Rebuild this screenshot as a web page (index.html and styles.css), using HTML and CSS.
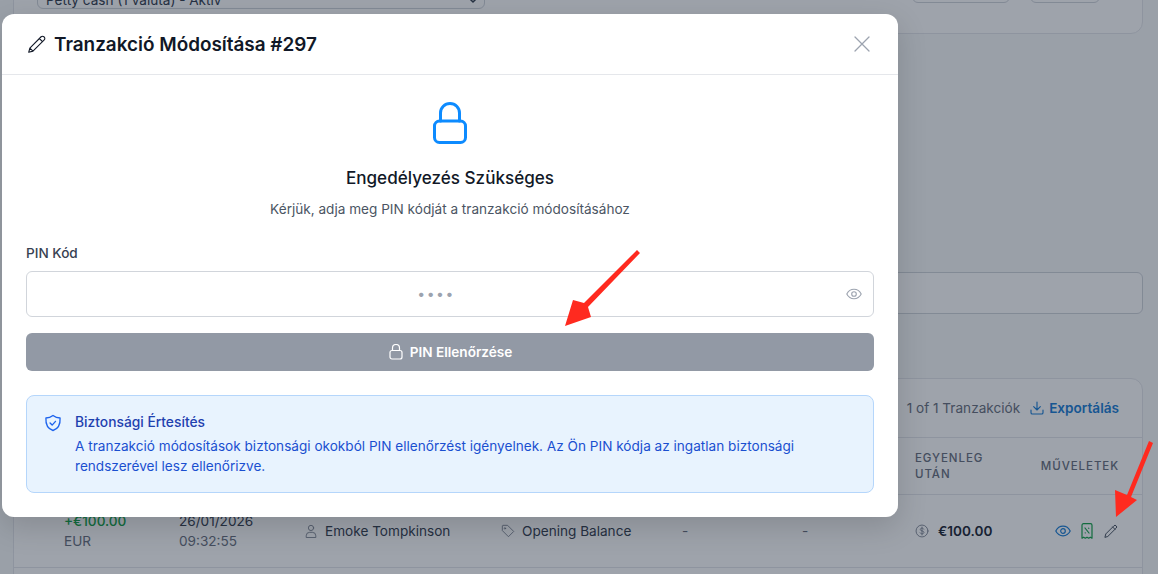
FILE: index.html
```html
<!DOCTYPE html>
<html lang="hu">

<head>
	<meta charset="utf-8">
	<title>Tranzakció Módosítása #297</title>
	<link rel="stylesheet" href="styles.css">
</head>

<body>
	<div class="page">
		<div class="card filter-card">
			<div class="select">
				<span>Petty cash (1 valuta) - Aktív</span>
				<svg class="chevron" viewBox="0 0 12 12"><path d="M2.5 4.5 6 8l3.5-3.5" /></svg>
			</div>
			<div class="filter-btn btn-wide"></div>
			<div class="filter-btn btn-narrow"></div>
		</div>

		<div class="search-box"></div>

		<div class="card table-card">
			<div class="table-top">
				<span class="count">1 of 1 Tranzakciók</span>
				<span class="export">
					<svg class="icon-sm" viewBox="0 0 24 24"><path d="M3 15v4a2 2 0 0 0 2 2h14a2 2 0 0 0 2-2v-4M7 10l5 5 5-5M12 15V3" /></svg>
					Exportálás
				</span>
			</div>

			<div class="tx-grid tx-head">
				<div></div>
				<div></div>
				<div></div>
				<div></div>
				<div></div>
				<div></div>
				<div>Egyenleg<br>után</div>
				<div class="right">Műveletek</div>
			</div>

			<div class="tx-grid tx-row">
				<div>
					<div class="amount">+€100.00</div>
					<div class="muted">EUR</div>
				</div>
				<div>
					<div>26/01/2026</div>
					<div class="muted">09:32:55</div>
				</div>
				<div class="with-icon">
					<svg class="icon-row" viewBox="0 0 16 16"><circle cx="8" cy="4.5" r="3" /><path d="M2.5 15v-1.5a4 4 0 0 1 4-4h3a4 4 0 0 1 4 4V15z" /></svg>
					Emoke Tompkinson
				</div>
				<div class="with-icon">
					<svg class="icon-row" viewBox="0 0 16 16"><path d="M1.5 2.5v5l7 7 6-6-7-7h-5z" /><circle cx="4.5" cy="5" r=".8" /></svg>
					Opening Balance
				</div>
				<div class="muted">-</div>
				<div class="muted">-</div>
				<div class="with-icon balance">
					<svg class="icon-row" viewBox="0 0 16 16"><circle cx="8" cy="8" r="6.8" /><path d="M10 5.8C9.5 5 8.8 4.8 8 4.8c-1.2 0-2 .6-2 1.5 0 2.2 4.2 1 4.2 3.3 0 1-.9 1.6-2.2 1.6-.9 0-1.7-.4-2.2-1.1M8 3.5v9" /></svg>
					€100.00
				</div>
				<div class="actions">
					<svg class="act act-view" viewBox="0 0 16 16"><path d="M.8 8C2.3 5 5 3.2 8 3.2S13.7 5 15.2 8c-1.5 3-4.2 4.8-7.2 4.8S2.3 11 .8 8z" /><circle cx="8" cy="8" r="2.3" /></svg>
					<svg class="act act-receipt" viewBox="0 0 16 16"><path d="M3 2.2A1.5 1.5 0 0 1 4.5.7h7A1.5 1.5 0 0 1 13 2.2v13l-1.7-1-1.600 1-1.700-1-1.700 1-1.600-1-1.700 1z" /><path d="m6 5 4 5M6.200 9.800l.1.100M9.700 5.200l.1.100" /></svg>
					<svg class="act act-edit" viewBox="0 0 24 24"><path d="m3 21 1.200-4.600L16.500 4.100a2.100 2.100 0 0 1 3 0l.4.4a2.100 2.100 0 0 1 0 3L7.600 19.800zM14.500 6 18 9.500" /></svg>
				</div>
			</div>
			<div class="tx-grid tx-row"></div>
		</div>

		<div class="overlay"></div>

		<div class="modal">
			<div class="modal-header">
				<svg class="title-icon" viewBox="0 0 24 24"><path d="m3 21 1.200-4.600L16.500 4.100a2.100 2.100 0 0 1 3 0l.4.4a2.100 2.100 0 0 1 0 3L7.600 19.800zM14.500 6 18 9.500M4.200 16.400l3.400 3.400" /></svg>
				<h2>Tranzakció Módosítása #297</h2>
				<svg class="close" viewBox="0 0 16 16"><path d="m1 1 14 14M15 1 1 15" /></svg>
			</div>

			<div class="modal-body">
				<div class="auth-head">
					<svg class="lock-big" viewBox="0 0 48 48"><rect x="8.500" y="22" width="31" height="21.500" rx="5" /><path d="M14.500 22v-8a9.500 9.500 0 0 1 19 0v8" /></svg>
					<h3>Engedélyezés Szükséges</h3>
					<p>Kérjük, adja meg PIN kódját a tranzakció módosításához</p>
				</div>

				<label class="pin-label" for="pin">PIN Kód</label>
				<div class="pin-field">
					<input id="pin" type="text" placeholder="••••">
					<svg class="pin-eye" viewBox="0 0 16 16"><path d="M.8 8C2.300 5 5 3.200 8 3.200S13.700 5 15.200 8c-1.500 3-4.200 4.800-7.200 4.800S2.300 11 .8 8z" /><circle cx="8" cy="8" r="2.300" /></svg>
				</div>

				<button class="verify-btn">
					<svg class="btn-lock" viewBox="0 0 16 16"><rect x="2" y="6.500" width="12" height="8.500" rx="2" /><path d="M4.500 6.500V4a3.500 3.500 0 0 1 7 0v2.500" /></svg>
					PIN Ellenőrzése
				</button>

				<div class="notice">
					<svg class="notice-icon" viewBox="0 0 24 24"><path d="M12 3c2.500 2 5.300 3 8.500 3 .5 8-2.500 13-8.500 15C6 19 3 14 3.500 6c3.200 0 6-1 8.500-3z" /><path d="m8.500 12 2.500 2.500 4-4.500" /></svg>
					<div>
						<div class="notice-title">Biztonsági Értesítés</div>
						<div class="notice-text">A tranzakció módosítások biztonsági okokból PIN ellenőrzést igényelnek. Az Ön PIN kódja az ingatlan biztonsági rendszerével lesz ellenőrizve.</div>
					</div>
				</div>
			</div>
		</div>

		<!-- red arrows drawn on top of the screenshot -->
		<svg class="arrows" viewBox="0 0 1158 574">
			<polygon points="640,253 637,250 584,303 573,300 565,326 591,317 588,307" />
			<polygon points="1153,443 1149,441 1127,495 1115,490 1116,517 1137,500 1131,497" />
		</svg>
	</div>
</body>

</html>
```

FILE: styles.css
```css
* {
	box-sizing: border-box;
}

html,
body {
	margin: 0;
	height: 100%;
}

body {
	font-family: Inter, "Liberation Sans", sans-serif;
	font-size: 13.6px;
	line-height: 20px;
	color: #1f2937;
	background: #f9fafb;
}

svg {
	fill: none;
	stroke: currentColor;
	stroke-linecap: round;
	stroke-linejoin: round;
}

.page {
	position: relative;
	width: 1158px;
	height: 574px;
	overflow: hidden;
	padding: 0 15px 0 13px;
}

.card {
	background: #fff;
	border: 1px solid #e5e7eb;
	border-radius: 12px;
}

/* top filter card, mostly scrolled away */
.filter-card {
	display: flex;
	align-items: flex-start;
	margin-top: -57px;
	height: 91px;
	padding: 21px 23px 0;
}

.select {
	display: flex;
	align-items: center;
	justify-content: space-between;
	width: 448px;
	height: 38px;
	margin-top: 6px;
	padding: 19px 5px 0 8px;
	border: 1px solid #d1d5db;
	border-radius: 6px;
	color: #374151;
}

.chevron {
	width: 12px;
	height: 12px;
	stroke-width: 1.5;
}

.filter-btn {
	height: 38px;
	border: 1px solid #d1d5db;
	border-radius: 6px;
}

.btn-wide {
	width: 98px;
	margin-left: 427px;
}

.btn-narrow {
	width: 70px;
	margin-left: 20px;
}

.search-box {
	height: 42px;
	margin-top: 238px;
	background: #fff;
	border: 1px solid #d1d5db;
	border-radius: 6px;
}

.table-card {
	margin-top: 64px;
	height: 260px;
}

.table-top {
	display: flex;
	align-items: center;
	justify-content: flex-end;
	gap: 9px;
	height: 58px;
	padding-right: 23px;
}

.count {
	color: #6b7280;
}

.export {
	display: flex;
	align-items: center;
	gap: 4px;
	color: #1d7fd6;
	font-weight: 600;
}

.icon-sm {
	width: 16px;
	height: 16px;
	stroke-width: 1.7;
}

.tx-grid {
	display: grid;
	grid-template-columns: 115px 125px 197px 181px 120px 113px 1fr auto;
	align-items: center;
	padding: 0 23px 0 50px;
}

.tx-head {
	height: 58px;
	border-top: 1px solid #e5e7eb;
	border-bottom: 1px solid #e5e7eb;
	font-size: 11.5px;
	font-weight: 500;
	line-height: 16px;
	letter-spacing: 0.08em;
	text-transform: uppercase;
	color: #6b7280;
}

.tx-head .right {
	text-align: right;
	white-space: nowrap;
}

.tx-row {
	height: 73px;
	border-bottom: 1px solid #e5e7eb;
	color: #374151;
}

.amount {
	color: #16a34a;
	font-weight: 500;
}

.muted {
	color: #6b7280;
}

.with-icon {
	display: flex;
	align-items: center;
	gap: 7px;
}

.icon-row {
	width: 14px;
	height: 14px;
	color: #7b8290;
	stroke-width: 1;
	flex: none;
}

.balance {
	gap: 9px;
	font-weight: 600;
	color: #1f2937;
	white-space: nowrap;
}

.actions {
	display: flex;
	align-items: center;
	justify-content: flex-end;
	gap: 8px;
}

.act {
	width: 16px;
	height: 16px;
	stroke-width: 1.2;
	flex: none;
}

.act-view {
	color: #1d7fd6;
}

.act-receipt {
	color: #16a34a;
}

.act-edit {
	color: #4b5563;
	stroke-width: 1.5;
}

.overlay {
	position: absolute;
	inset: 0;
	background: rgba(12, 26, 44, 0.4);
}

.modal {
	position: absolute;
	top: 14px;
	left: 2px;
	width: 896px;
	background: #fff;
	border-radius: 12px;
	box-shadow: 0 10px 30px rgba(0, 0, 0, 0.15);
}

.modal-header {
	display: flex;
	align-items: center;
	height: 61px;
	padding: 0 28px 0 24px;
	border-bottom: 1px solid #e5e7eb;
}

.title-icon {
	width: 22px;
	height: 22px;
	margin-right: 6px;
	color: #111827;
	stroke-width: 1.2;
}

h2 {
	flex: 1;
	margin: 0;
	padding-top: 2px;
	font-size: 18.9px;
	line-height: 28px;
	font-weight: 600;
	color: #111827;
}

.close {
	width: 16px;
	height: 16px;
	color: #9ca3af;
	stroke-width: 1.3;
}

.modal-body {
	padding: 24px;
}

.auth-head {
	text-align: center;
	margin-bottom: 24px;
}

.lock-big {
	display: block;
	width: 48px;
	height: 48px;
	margin: 0 auto 17px;
	color: #0d8bff;
	stroke-width: 3;
}

h3 {
	margin: 0 0 8px;
	font-size: 17.1px;
	line-height: 27px;
	font-weight: 500;
	color: #111827;
}

.auth-head p {
	margin: 0;
	color: #4b5563;
}

.pin-label {
	display: block;
	margin-bottom: 8px;
	font-weight: 500;
	color: #374151;
}

.pin-field {
	position: relative;
	margin-bottom: 16px;
}

.pin-field input {
	display: block;
	width: 100%;
	height: 46px;
	padding: 0 40px 2px 12px;
	border: 1px solid #d1d5db;
	border-radius: 6px;
	outline: none;
	font: inherit;
	font-size: 14px;
	letter-spacing: 1.5px;
	text-align: center;
}

.pin-field input::placeholder {
	color: #9ca3af;
}

.pin-eye {
	position: absolute;
	top: 15px;
	right: 12px;
	width: 16px;
	height: 16px;
	color: #9ca3af;
	stroke-width: 1.1;
}

.verify-btn {
	display: flex;
	align-items: center;
	justify-content: center;
	gap: 6px;
	width: 100%;
	height: 38px;
	margin-bottom: 24px;
	border: 0;
	border-radius: 6px;
	background: #9299a5;
	color: #fff;
	font: inherit;
	font-weight: 600;
}

.btn-lock {
	width: 16px;
	height: 16px;
	stroke-width: 1.2;
}

.notice {
	display: flex;
	gap: 12px;
	padding: 16px;
	background: #e8f3fe;
	border: 1px solid #b5d6fb;
	border-radius: 8px;
}

.notice-icon {
	width: 20px;
	height: 20px;
	margin-top: 1px;
	flex: none;
	color: #1d63ed;
	stroke-width: 1.6;
}

.notice-title {
	margin-bottom: 4px;
	font-size: 13.8px;
	font-weight: 500;
	color: #1e40af;
}

.notice-text {
	color: #1a4fd0;
}

.arrows {
	position: absolute;
	inset: 0;
	width: 1158px;
	height: 574px;
	stroke: none;
	fill: #ff2a1f;
}
```
